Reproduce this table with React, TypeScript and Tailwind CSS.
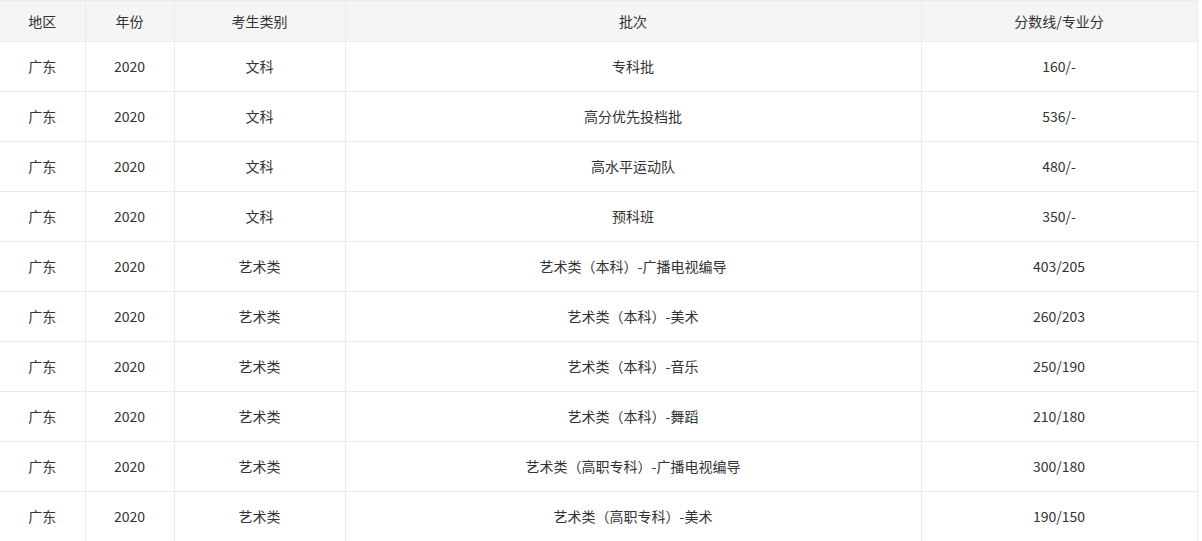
const rows = [
  ["广东", "2020", "文科", "专科批", "160/-"],
  ["广东", "2020", "文科", "高分优先投档批", "536/-"],
  ["广东", "2020", "文科", "高水平运动队", "480/-"],
  ["广东", "2020", "文科", "预科班", "350/-"],
  ["广东", "2020", "艺术类", "艺术类（本科）-广播电视编导", "403/205"],
  ["广东", "2020", "艺术类", "艺术类（本科）-美术", "260/203"],
  ["广东", "2020", "艺术类", "艺术类（本科）-音乐", "250/190"],
  ["广东", "2020", "艺术类", "艺术类（本科）-舞蹈", "210/180"],
  ["广东", "2020", "艺术类", "艺术类（高职专科）-广播电视编导", "300/180"],
  ["广东", "2020", "艺术类", "艺术类（高职专科）-美术", "190/150"],
];

const headers = ["地区", "年份", "考生类别", "批次", "分数线/专业分"];

export default function App() {
  return (
    <div className="bg-white w-[1202px] h-[541px] overflow-hidden">
      <table
        className="w-[1197px] table-fixed border-collapse text-[14px] text-[#333] text-center"
        style={{ fontFamily: '"Microsoft YaHei", "Noto Sans CJK SC", sans-serif' }}
      >
        <colgroup>
          <col className="w-[85px]" />
          <col className="w-[89px]" />
          <col className="w-[171px]" />
          <col className="w-[576px]" />
          <col className="w-[276px]" />
        </colgroup>
        <thead>
          <tr className="bg-[#f5f5f5] h-[41px]">
            {headers.map((h) => (
              <th key={h} className="border border-[#ebebeb] first:border-l-0 font-normal p-0">
                {h}
              </th>
            ))}
          </tr>
        </thead>
        <tbody>
          {rows.map((r, i) => (
            <tr key={i} className="h-[50px]">
              {r.map((c, j) => (
                <td key={j} className="border border-[#ebebeb] first:border-l-0 p-0">
                  {c}
                </td>
              ))}
            </tr>
          ))}
        </tbody>
      </table>
    </div>
  );
}
